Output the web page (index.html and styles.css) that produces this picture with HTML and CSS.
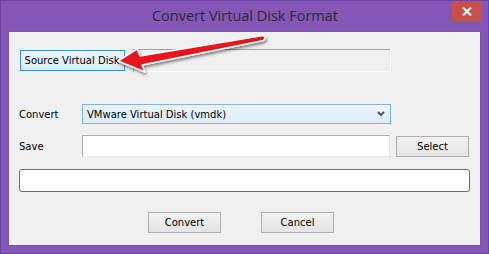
FILE: index.html
```html
<!DOCTYPE html>
<html>
<head>
<meta charset="utf-8">
<link rel="stylesheet" href="styles.css">
</head>
<body>
<div class="window">
  <div class="titlebar">
    <div class="title">Convert Virtual Disk Format</div>
    <div class="close">
      <svg width="10" height="9" viewBox="0 0 10 9"><path d="M1 0.5 L9 8.5 M9 0.5 L1 8.5" stroke="#fff" stroke-width="2"/></svg>
    </div>
  </div>
  <div class="client">
    <div class="row-source">
      <div class="btn btn-focus">Source Virtual Disk</div>
      <div class="source-field"></div>
    </div>
    <div class="row row-convert">
      <div class="label">Convert</div>
      <div class="combo">
        <span>VMware Virtual Disk (vmdk)</span>
        <svg class="chev" width="8" height="6" viewBox="0 0 8 6"><path d="M1 1 L4 4 L7 1" stroke="#555" stroke-width="2" fill="none"/></svg>
      </div>
    </div>
    <div class="row row-save">
      <div class="label">Save</div>
      <div class="input"></div>
      <div class="btn btn-select">Select</div>
    </div>
    <div class="progress"></div>
    <div class="actions">
      <div class="btn btn-action">Convert</div>
      <div class="btn btn-action">Cancel</div>
    </div>
  </div>
  <svg class="arrow" width="489" height="254" viewBox="0 0 489 254">
    <defs>
      <filter id="sh" x="-10%" y="-50%" width="130%" height="200%">
        <feDropShadow dx="1" dy="2" stdDeviation="1.8" flood-color="#000" flood-opacity="0.5"/>
      </filter>
    </defs>
    <polygon points="118,61 137,49 140,56 263,35.5 265.5,37.5 263.5,40.5 142,65 145,72" fill="#e8161c" stroke="#fff" stroke-width="1.5" stroke-linejoin="round" filter="url(#sh)"/>
  </svg>
</div>
</body>
</html>
```
FILE: styles.css
```css
html, body {
  margin: 0;
  padding: 0;
  background: #8456b8;
}
.window {
  position: relative;
  width: 489px;
  height: 254px;
  box-sizing: border-box;
  background: #8456b8;
  border: 1px solid #6c44a0;
  font-family: "DejaVu Sans", sans-serif;
  font-size: 10px;
  color: #000;
}
.titlebar {
  height: 30px;
  display: flex;
  justify-content: center;
  align-items: center;
  position: relative;
}
.title {
  font-family: "Open Sans", sans-serif;
  font-size: 14.5px;
  color: #2a2a33;
  margin-top: -1px;
  padding-left: 1px;
}
.close {
  position: absolute;
  top: 0;
  right: 6px;
  width: 30px;
  height: 20px;
  background: #c7504f;
  display: flex;
  align-items: center;
  justify-content: center;
}
.client {
  margin: 0 7px;
  height: 215px;
  box-sizing: border-box;
  background: #f0f0f0;
  border: 1px solid #7a55a8;
  padding: 17px 10px 0 10px;
  display: flex;
  flex-direction: column;
}
.row-source {
  display: flex;
  align-items: flex-start;
  height: 23px;
}
.btn {
  box-sizing: border-box;
  border: 1px solid #adadad;
  background: linear-gradient(#f2f2f2, #e4e4e4);
  display: flex;
  align-items: center;
  justify-content: center;
  color: #000;
}
.btn-focus {
  margin-top: 1px;
  margin-left: 1px;
  width: 105px;
  height: 21px;
  border-color: #3c8fde;
  background: linear-gradient(#ecf4fc, #dcecfc);
  padding-right: 1px;
}
.source-field {
  margin-left: 8px;
  width: 258px;
  height: 23px;
  box-sizing: border-box;
  border-top: 1px solid #a0a0a0;
  border-left: 1px solid #a0a0a0;
  border-right: 1px solid #fff;
  border-bottom: 1px solid #fff;
}
.row {
  display: flex;
  align-items: center;
}
.label {
  width: 63px;
}
.row-convert {
  margin-top: 32px;
  height: 20px;
}
.combo {
  width: 309px;
  height: 20px;
  box-sizing: border-box;
  border: 1px solid #7eb4ea;
  background: linear-gradient(#ecf4fc, #dcecfc);
  display: flex;
  align-items: center;
  justify-content: space-between;
  padding: 0 4px 0 4px;
}
.chev {
  margin-right: 1px;
}
.row-save {
  margin-top: 11px;
  height: 22px;
}
.input {
  width: 308px;
  height: 22px;
  box-sizing: border-box;
  border: 1px solid #abadb3;
  border-color: #abadb3 #e3e9ef #e3e9ef #abadb3;
  background: #fff;
}
.btn-select {
  margin-left: 6px;
  width: 73px;
  height: 21px;
}
.progress {
  margin-top: 12px;
  width: 451px;
  height: 23px;
  box-sizing: border-box;
  border: 1px solid #6d6d6d;
  border-radius: 3px;
  background: #fff;
}
.actions {
  margin-top: 20px;
  display: flex;
  justify-content: center;
  gap: 40px;
  padding-right: 7px;
}
.btn-action {
  width: 73px;
  height: 21px;
}
.arrow {
  position: absolute;
  left: -1px;
  top: -1px;
  pointer-events: none;
}
```
